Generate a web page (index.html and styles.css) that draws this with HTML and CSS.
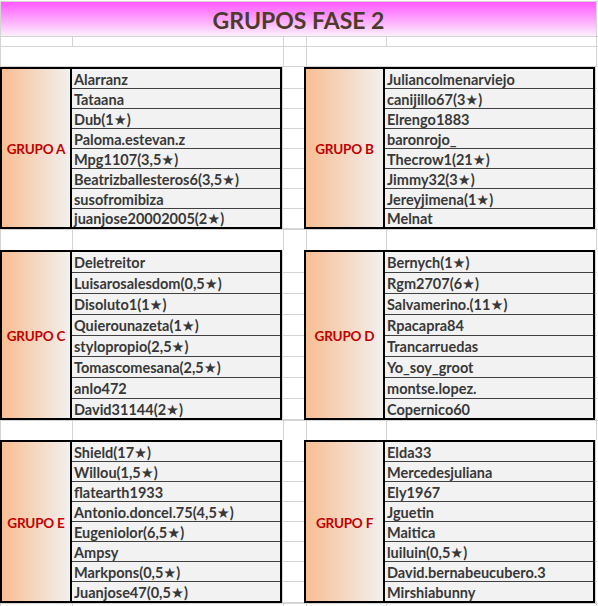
FILE: index.html
```html
<!DOCTYPE html>
<html lang="es">
<head>
<meta charset="utf-8">
<title>Grupos Fase 2</title>
<link rel="stylesheet" href="styles.css">
</head>
<body>
<div class="sheet">
  <div class="row row-title">
    <div class="cell title">GRUPOS FASE 2</div>
    <div class="cell c-f"></div>
  </div>
  <div class="row row-blank1">
    <div class="cell c-a"></div><div class="cell c-b"></div><div class="cell c-c"></div><div class="cell c-d"></div><div class="cell c-e"></div><div class="cell c-f"></div>
  </div>
  <div class="row row-blank2">
    <div class="cell c-ab"></div><div class="cell c-c"></div><div class="cell c-de"></div><div class="cell c-f"></div>
  </div>

  <div class="band band-1">
    <div class="group g-left">
      <div class="label">GRUPO A</div>
      <div class="names">
        <div class="name">Alarranz</div>
        <div class="name">Tataana</div>
        <div class="name">Dub(1★)</div>
        <div class="name">Paloma.estevan.z</div>
        <div class="name">Mpg1107(3,5★)</div>
        <div class="name">Beatrizballesteros6(3,5★)</div>
        <div class="name">susofromibiza</div>
        <div class="name">juanjose20002005(2★)</div>
      </div>
    </div>
    <div class="spacer"><div class="sp"></div><div class="sp"></div><div class="sp"></div><div class="sp"></div><div class="sp"></div><div class="sp"></div><div class="sp"></div><div class="sp"></div></div>
    <div class="group g-right">
      <div class="label">GRUPO B</div>
      <div class="names">
        <div class="name">Juliancolmenarviejo</div>
        <div class="name">canijillo67(3★)</div>
        <div class="name">Elrengo1883</div>
        <div class="name">baronrojo_</div>
        <div class="name">Thecrow1(21★)</div>
        <div class="name">Jimmy32(3★)</div>
        <div class="name">Jereyjimena(1★)</div>
        <div class="name">Melnat</div>
      </div>
    </div>
    <div class="spacer strip"><div class="sp"></div><div class="sp"></div><div class="sp"></div><div class="sp"></div><div class="sp"></div><div class="sp"></div><div class="sp"></div><div class="sp"></div></div>
  </div>

  <div class="row row-gap gap-1">
    <div class="cell c-a"></div><div class="cell c-b"></div><div class="cell c-c"></div><div class="cell c-d"></div><div class="cell c-e"></div><div class="cell c-f"></div>
  </div>

  <div class="band band-2">
    <div class="group g-left">
      <div class="label">GRUPO C</div>
      <div class="names">
        <div class="name">Deletreitor</div>
        <div class="name">Luisarosalesdom(0,5★)</div>
        <div class="name">Disoluto1(1★)</div>
        <div class="name">Quierounazeta(1★)</div>
        <div class="name">stylopropio(2,5★)</div>
        <div class="name">Tomascomesana(2,5★)</div>
        <div class="name">anlo472</div>
        <div class="name">David31144(2★)</div>
      </div>
    </div>
    <div class="spacer"><div class="sp"></div><div class="sp"></div><div class="sp"></div><div class="sp"></div><div class="sp"></div><div class="sp"></div><div class="sp"></div><div class="sp"></div></div>
    <div class="group g-right">
      <div class="label">GRUPO D</div>
      <div class="names">
        <div class="name">Bernych(1★)</div>
        <div class="name">Rgm2707(6★)</div>
        <div class="name">Salvamerino.(11★)</div>
        <div class="name">Rpacapra84</div>
        <div class="name">Trancarruedas</div>
        <div class="name">Yo_soy_groot</div>
        <div class="name">montse.lopez.</div>
        <div class="name">Copernico60</div>
      </div>
    </div>
    <div class="spacer strip"><div class="sp"></div><div class="sp"></div><div class="sp"></div><div class="sp"></div><div class="sp"></div><div class="sp"></div><div class="sp"></div><div class="sp"></div></div>
  </div>

  <div class="row row-gap gap-2">
    <div class="cell c-a"></div><div class="cell c-b"></div><div class="cell c-c"></div><div class="cell c-d"></div><div class="cell c-e"></div><div class="cell c-f"></div>
  </div>

  <div class="band band-3">
    <div class="group g-left">
      <div class="label">GRUPO E</div>
      <div class="names">
        <div class="name">Shield(17★)</div>
        <div class="name">Willou(1,5★)</div>
        <div class="name">flatearth1933</div>
        <div class="name">Antonio.doncel.75(4,5★)</div>
        <div class="name">Eugeniolor(6,5★)</div>
        <div class="name">Ampsy</div>
        <div class="name">Markpons(0,5★)</div>
        <div class="name">Juanjose47(0,5★)</div>
      </div>
    </div>
    <div class="spacer"><div class="sp"></div><div class="sp"></div><div class="sp"></div><div class="sp"></div><div class="sp"></div><div class="sp"></div><div class="sp"></div><div class="sp"></div></div>
    <div class="group g-right">
      <div class="label">GRUPO F</div>
      <div class="names">
        <div class="name">Elda33</div>
        <div class="name">Mercedesjuliana</div>
        <div class="name">Ely1967</div>
        <div class="name">Jguetin</div>
        <div class="name">Maitica</div>
        <div class="name">luiluin(0,5★)</div>
        <div class="name">David.bernabeucubero.3</div>
        <div class="name">Mirshiabunny</div>
      </div>
    </div>
    <div class="spacer strip"><div class="sp"></div><div class="sp"></div><div class="sp"></div><div class="sp"></div><div class="sp"></div><div class="sp"></div><div class="sp"></div><div class="sp"></div></div>
  </div>

  <div class="row row-end">
    <div class="cell c-a"></div><div class="cell c-b"></div><div class="cell c-c"></div><div class="cell c-d"></div><div class="cell c-e"></div><div class="cell c-f"></div>
  </div>
</div>
</body>
</html>
```

FILE: styles.css
```css
html, body {
  margin: 0;
  padding: 0;
  background: #ffffff;
}

.sheet {
  width: 598px;
  height: 605px;
  margin-top: 1px;
  border-top: 1px solid #d4d4d4;
  box-sizing: border-box;
  overflow: hidden;
  font-family: "Lato", "DejaVu Sans", sans-serif;
  font-weight: 700;
  font-size: 14.5px;
  color: #383838;
}

.row {
  display: flex;
  box-sizing: border-box;
  border-left: 1px solid #d4d4d4;
}

.cell {
  box-sizing: border-box;
  border-right: 1px solid #d4d4d4;
  border-bottom: 1px solid #d4d4d4;
  height: 100%;
}

.c-a { width: 72px; }
.c-b { width: 211px; }
.c-c { width: 23px; }
.c-d { width: 80px; }
.c-e { width: 210px; }
.c-f { width: 1px; border-right: 0; }
.c-ab { width: 283px; }
.c-de { width: 290px; }

.row-title { height: 35px; }
.row-blank1 { height: 10px; }
.row-blank2 { height: 20px; }

.title {
  width: 596px;
  background: linear-gradient(#ff58ff, #fbf0fb);
  display: flex;
  align-items: center;
  justify-content: center;
  font-size: 23px;
  font-weight: 700;
  color: #4c3b2b;
  padding-top: 1px;
}

.row-gap {
  border-top: 1px solid #d4d4d4;
}
.row-gap .cell { border-bottom: 0; }
.gap-1 { height: 21px; }
.gap-2 { height: 20px; }

.row-end {
  height: 3px;
  border-top: 1px solid #d4d4d4;
}
.row-end .cell { border-bottom: 0; }

/* group bands */
.band {
  display: flex;
  box-sizing: border-box;
  border-left: 1px solid #d4d4d4;
}
.band-1 { height: 162px; }
.band-2 { height: 170px; }
.band-3 { height: 163px; }

.group {
  display: flex;
  box-sizing: border-box;
  border: 2px solid #000000;
  height: 100%;
}
.g-left { width: 282px; margin-left: -1px; }
.g-left .label { width: 68px; }
.g-right { width: 291px; }
.g-right .label { width: 77px; }

.label {
  flex: none;
  border-right: 2px solid #000000;
  background: linear-gradient(to right, #f8be93, #f2f0ee);
  color: #c00000;
  display: flex;
  align-items: center;
  justify-content: center;
  padding-top: 2px;
  font-size: 13.5px;
  letter-spacing: -0.2px;
  white-space: nowrap;
}

.names {
  flex: 1;
  display: flex;
  flex-direction: column;
  background: #f2f2f2;
}

.name {
  flex: none;
  box-sizing: border-box;
  height: 20px;
  border-bottom: 1px solid #404040;
  display: flex;
  align-items: center;
  padding-left: 2px;
  padding-top: 1px;
  white-space: nowrap;
}
.name:last-child {
  flex: 1;
  border-bottom: 0;
}
.band-2 .name { height: 21px; }
.band-2 .name:last-child { height: auto; }

.spacer {
  flex: none;
  width: 22px;
  box-sizing: border-box;
  border-left: 1px solid #d4d4d4;
  display: flex;
  flex-direction: column;
  height: 100%;
}
.spacer.strip { width: 2px; }

.sp {
  flex: none;
  box-sizing: border-box;
  height: 20px;
  border-bottom: 1px solid #d4d4d4;
}
.sp:first-child { height: 22px; }
.sp:last-child { flex: 1; height: auto; }
.band-2 .sp { height: 21px; }
.band-2 .sp:first-child { height: 23px; }
.band-2 .sp:last-child { height: auto; }
```
